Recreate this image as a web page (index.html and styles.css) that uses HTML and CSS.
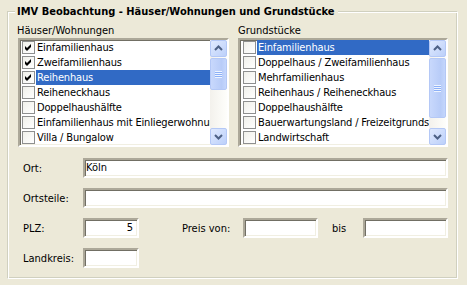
FILE: index.html
```html
<!DOCTYPE html>
<html>
<head>
<meta charset="utf-8">
<link rel="stylesheet" href="styles.css">
</head>
<body>
<div class="group">
  <div class="legend">IMV Beobachtung - Häuser/Wohnungen und Grundstücke</div>
  <div class="lists">
    <div class="col col-l">
      <div class="cap">Häuser/Wohnungen</div>
      <div class="listbox lb-l">
        <div class="items">
          <div class="item"><span class="cb"><svg viewBox="0 0 11 11" width="11" height="11"><polygon points="2,4 4,6 8,2 8,5 4,9 2,7"/></svg></span><span class="txt">Einfamilienhaus</span></div>
          <div class="item"><span class="cb"><svg viewBox="0 0 11 11" width="11" height="11"><polygon points="2,4 4,6 8,2 8,5 4,9 2,7"/></svg></span><span class="txt">Zweifamilienhaus</span></div>
          <div class="item sel"><span class="cb"><svg viewBox="0 0 11 11" width="11" height="11"><polygon points="2,4 4,6 8,2 8,5 4,9 2,7"/></svg></span><span class="txt">Reihenhaus</span></div>
          <div class="item"><span class="cb"></span><span class="txt">Reiheneckhaus</span></div>
          <div class="item"><span class="cb"></span><span class="txt">Doppelhaushälfte</span></div>
          <div class="item"><span class="cb"></span><span class="txt">Einfamilienhaus mit Einliegerwohnung</span></div>
          <div class="item"><span class="cb"></span><span class="txt">Villa / Bungalow</span></div>
        </div>
        <div class="sb">
          <div class="btn"><svg viewBox="0 0 15 15" width="15" height="15"><polyline points="4,9 7.5,5.5 11,9"/></svg></div>
          <div class="track"><div class="thumb thumb-l"><span class="grip"></span></div></div>
          <div class="btn"><svg viewBox="0 0 15 15" width="15" height="15"><polyline points="4,6 7.5,9.5 11,6"/></svg></div>
        </div>
      </div>
    </div>
    <div class="col col-r">
      <div class="cap">Grundstücke</div>
      <div class="listbox">
        <div class="items">
          <div class="item sel"><span class="cb"></span><span class="txt">Einfamilienhaus</span></div>
          <div class="item"><span class="cb"></span><span class="txt">Doppelhaus / Zweifamilienhaus</span></div>
          <div class="item"><span class="cb"></span><span class="txt">Mehrfamilienhaus</span></div>
          <div class="item"><span class="cb"></span><span class="txt">Reihenhaus / Reiheneckhaus</span></div>
          <div class="item"><span class="cb"></span><span class="txt">Doppelhaushälfte</span></div>
          <div class="item"><span class="cb"></span><span class="txt">Bauerwartungsland / Freizeitgrundstück</span></div>
          <div class="item"><span class="cb"></span><span class="txt">Landwirtschaft</span></div>
        </div>
        <div class="sb">
          <div class="btn"><svg viewBox="0 0 15 15" width="15" height="15"><polyline points="4,9 7.5,5.5 11,9"/></svg></div>
          <div class="track"><div class="thumb thumb-r"><span class="grip"></span></div></div>
          <div class="btn"><svg viewBox="0 0 15 15" width="15" height="15"><polyline points="4,6 7.5,9.5 11,6"/></svg></div>
        </div>
      </div>
    </div>
  </div>
  <div class="form">
    <div class="row"><span class="lbl">Ort:</span><div class="inp grow">Köln</div></div>
    <div class="row"><span class="lbl">Ortsteile:</span><div class="inp grow"></div></div>
    <div class="row"><span class="lbl">PLZ:</span><div class="inp small right">5</div><span class="lbl2">Preis von:</span><div class="inp price"></div><span class="lbl3">bis</span><div class="inp grow"></div></div>
    <div class="row"><span class="lbl">Landkreis:</span><div class="inp small"></div></div>
  </div>
</div>
</body>
</html>
```

FILE: styles.css
```css
html, body {
  margin: 0;
  padding: 0;
  background: #ECE9D8;
}
body {
  font-family: "DejaVu Sans Condensed", "DejaVu Sans", sans-serif;
  font-stretch: semi-condensed;
  font-size: 11px;
  color: #000;
  width: 467px;
  height: 285px;
  overflow: hidden;
}
.group {
  margin: 11px 9px 0 7px;
  height: 266px;
  border: 1px solid;
  border-color: #D0D0BF #FFFFFF #FFFFFF #D0D0BF;
  box-shadow: inset 1px 1px 0 #FFFFFF, inset -1px -1px 0 #D0D0BF;
  padding: 0 9px 0 9px;
  display: flex;
  flex-direction: column;
}
.legend {
  align-self: flex-start;
  margin: -7px 0 0 -2px;
  padding: 0 3px 0 2px;
  background: #ECE9D8;
  font-weight: bold;
  line-height: 13px;
  height: 13px;
}
.lists {
  display: flex;
  gap: 9px;
  margin-top: 6px;
}
.col {
  display: flex;
  flex-direction: column;
}
.col-l { width: 212px; }
.col-r { width: 210px; }
.cap {
  line-height: 13px;
  height: 13px;
  margin-bottom: 1px;
}
.listbox {
  height: 105px;
  border: 2px solid;
  border-color: #ACA899 #FFFFFF #FFFFFF #ACA899;
  box-shadow: inset 1px 1px 0 #716F64, inset -1px -1px 0 #F1EFE2;
  background: #fff;
  display: flex;
}
.lb-l {
  margin-left: 1px;
}
.items {
  flex: 1;
  min-width: 0;
  overflow: hidden;
  padding-left: 1px;
}
.lb-l .items {
  padding-left: 0;
}
.item {
  height: 15px;
  display: flex;
  align-items: center;
  white-space: nowrap;
}
.cb {
  flex: none;
  width: 11px;
  height: 11px;
  margin: 0 1px 0 2px;
  border: 1px solid #8E8F8F;
  background: linear-gradient(135deg, #F0F0EA, #FFFFFF);
  display: flex;
}
.cb svg {
  fill: #000;
}
.txt {
  flex: 1;
  line-height: 15px;
  height: 15px;
  padding-left: 1px;
  overflow: hidden;
  letter-spacing: -0.15px;
}
.sel .txt {
  background: #316AC5;
  color: #fff;
}
.sb {
  width: 17px;
  flex: none;
  display: flex;
  flex-direction: column;
  background: linear-gradient(to right, #F3F1EC, #FEFEFB);
}
.btn {
  height: 15px;
  border: 1px solid #B4C8F6;
  border-radius: 2px;
  background: linear-gradient(135deg, #E0EAFE, #BCD0FA);
  display: flex;
  align-items: center;
  justify-content: center;
}
.btn svg polyline {
  fill: none;
  stroke: #4D6185;
  stroke-width: 2;
}
.track {
  flex: 1;
  padding-top: 1px;
}
.thumb {
  border: 1px solid #B4C8F6;
  border-radius: 2px;
  background: linear-gradient(to right, #C8D8FC, #B8CCF8 70%, #C4D6FC);
  display: flex;
  align-items: center;
  justify-content: center;
}
.thumb-l { height: 30px; }
.thumb-r { height: 58px; }
.grip {
  width: 7px;
  height: 7px;
  background: repeating-linear-gradient(to bottom, #EEF4FE 0 1px, #8CB0F8 1px 2px);
}
.form {
  margin-top: 11px;
  padding-left: 6px;
  display: flex;
  flex-direction: column;
  gap: 10px;
}
.row {
  display: flex;
  align-items: center;
  height: 20px;
}
.lbl {
  width: 60px;
  flex: none;
}
.lbl2 {
  margin-left: 43px;
  width: 61px;
  flex: none;
}
.lbl3 {
  margin-left: 14px;
  width: 31px;
  flex: none;
}
.inp {
  box-sizing: border-box;
  height: 20px;
  border: 2px solid;
  border-color: #ACA899 #FFFFFF #FFFFFF #ACA899;
  box-shadow: inset 1px 1px 0 #716F64, inset -1px -1px 0 #F1EFE2;
  background: #fff;
  line-height: 16px;
  padding: 0 2px 0 1px;
  white-space: nowrap;
}
.grow { flex: 1; }
.small { width: 56px; flex: none; }
.price { width: 75px; flex: none; }
.right { text-align: right; padding-right: 4px; }
```
